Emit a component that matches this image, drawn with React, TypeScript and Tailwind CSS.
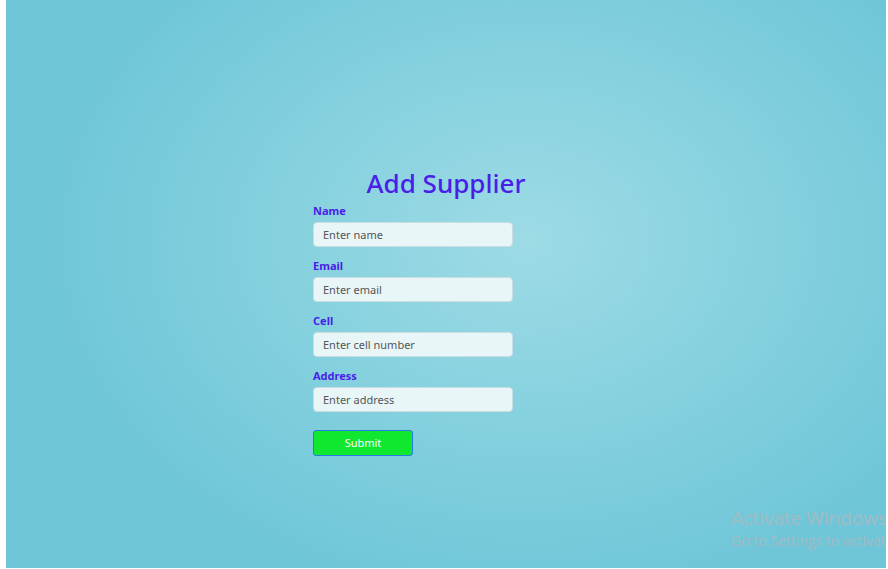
import React from "react";

const font = { fontFamily: '"Noto Sans", "Open Sans", sans-serif' };

function Field({ label, placeholder }: { label: string; placeholder: string }) {
  return (
    <div className="flex flex-col">
      <label className="text-[11px] font-bold leading-[14px] text-[#4a1ee8]">{label}</label>
      <input
        className="mt-[4px] h-[25px] w-[200px] rounded-[4px] border border-[#c9dde2] bg-[#e8f6f8] px-[9px] text-[11px] text-[#333] placeholder:text-[#555] outline-none"
        placeholder={placeholder}
      />
    </div>
  );
}

export default function App() {
  return (
    <div className="flex h-[569px] w-[888px] bg-white pl-[6px] pr-[2px]" style={font}>
      <div
        className="relative h-[568px] flex-1 overflow-hidden"
        style={{
          background:
            "radial-gradient(ellipse 480px 360px at 520px 240px, #9ddbe5 0%, #88d2df 45%, #6fc6d8 100%)",
        }}
      >
        <div className="mx-auto flex w-[266px] flex-col pt-[165px]">
          <h1 className="text-center text-[26px] font-medium leading-[36px] text-[#4a1ee8]">Add Supplier</h1>
          <div className="mt-[3px] flex flex-col gap-[12px]">
            <Field label="Name" placeholder="Enter name" />
            <Field label="Email" placeholder="Enter email" />
            <Field label="Cell" placeholder="Enter cell number" />
            <Field label="Address" placeholder="Enter address" />
          </div>
          <button className="mt-[18px] h-[26px] w-[100px] rounded-[3px] border border-[#2a7ae8] bg-[#10e830] text-[11px] text-white">
            Submit
          </button>
        </div>
        <div className="absolute left-[725px] top-[505px] whitespace-nowrap text-[#a3bac2]" style={{ fontFamily: '"Open Sans", sans-serif' }}>
          <div className="text-[19px] leading-[26px]">Activate Windows</div>
          <div className="text-[14px] leading-[20px]">Go to Settings to activate Windows.</div>
        </div>
      </div>
    </div>
  );
}
